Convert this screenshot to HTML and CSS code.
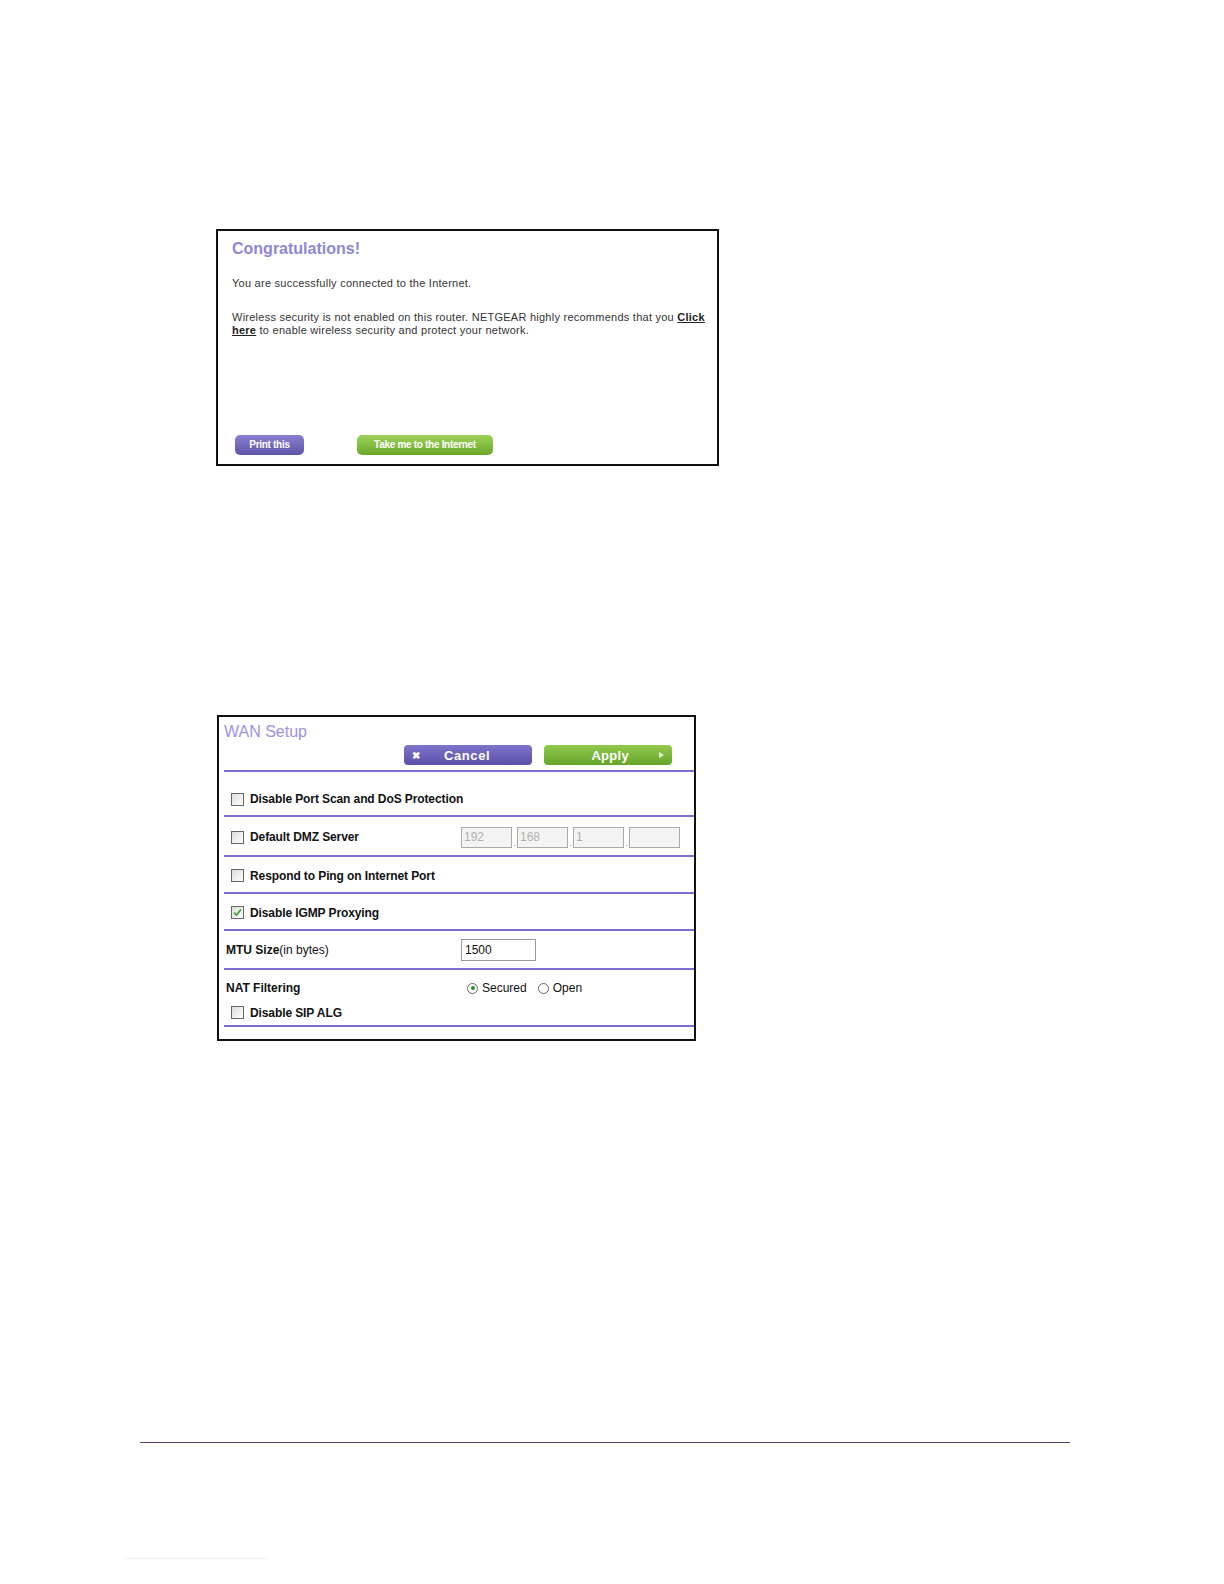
FILE: index.html
```html
<!DOCTYPE html>
<html>
<head>
<meta charset="utf-8">
<link rel="stylesheet" href="styles.css">
</head>
<body>
<div class="page">
  <div class="congrats">
    <h1 class="congrats-title">Congratulations!</h1>
    <p class="msg">You are successfully connected to the Internet.</p>
    <p class="msg msg-2">Wireless security is not enabled on this router. NETGEAR highly recommends that you <a class="lnk">Click</a><br><a class="lnk">here</a> to enable wireless security and protect your network.</p>
    <div class="congrats-btns">
      <span class="btn btn-purple btn-print">Print this</span>
      <span class="btn btn-green btn-take">Take me to the Internet</span>
    </div>
  </div>

  <div class="wan">
    <div class="wan-title">WAN Setup</div>
    <div class="wan-btns">
      <span class="wbtn wbtn-cancel"><span class="x">&#x2716;</span><span class="wlabel">Cancel</span></span>
      <span class="wbtn wbtn-apply"><span class="wlabel">Apply</span><span class="tri"></span></span>
    </div>
    <div class="rule"></div>
    <div class="row r1"><span class="cb"></span><span class="lbl">Disable Port Scan and DoS Protection</span></div>
    <div class="rule"></div>
    <div class="row r2"><span class="cb"></span><span class="lbl lbl-fixed">Default DMZ Server</span>
      <span class="ip"><span class="ipbox">192</span><span class="dot">.</span><span class="ipbox">168</span><span class="dot">.</span><span class="ipbox">1</span><span class="dot">.</span><span class="ipbox"></span></span>
    </div>
    <div class="rule"></div>
    <div class="row r3"><span class="cb"></span><span class="lbl">Respond to Ping on Internet Port</span></div>
    <div class="rule"></div>
    <div class="row r4"><span class="cb checked"><svg width="11" height="11" viewBox="0 0 11 11"><path d="M2 5.5 L4.5 8 L9 2.5" fill="none" stroke="#3a9a2a" stroke-width="1.6"/></svg></span><span class="lbl">Disable IGMP Proxying</span></div>
    <div class="rule"></div>
    <div class="row r5"><span class="lbl2 lbl-fixed2"><b>MTU Size</b>(in bytes)</span><span class="mtu">1500</span></div>
    <div class="rule"></div>
    <div class="row r6"><span class="lbl2 lbl-fixed2"><b>NAT Filtering</b></span>
      <span class="radios"><span class="rd on"></span><span class="rlbl">Secured</span><span class="rd"></span><span class="rlbl">Open</span></span>
    </div>
    <div class="row r7"><span class="cb"></span><span class="lbl">Disable SIP ALG</span></div>
    <div class="rule"></div>
  </div>

  <div class="footer-rule"></div>
  <div class="footer-short"></div>
</div>
</body>
</html>
```

FILE: styles.css
```css
html, body {
  margin: 0;
  padding: 0;
  background: #ffffff;
}
.page {
  width: 1224px;
  height: 1584px;
  display: flow-root;
  overflow: hidden;
  font-family: "Liberation Sans", Arial, sans-serif;
}
.congrats {
  margin: 229px 0 0 216px;
  width: 503px;
  height: 237px;
  box-sizing: border-box;
  border: 2px solid #111;
  padding: 8px 14px 0 14px;
}
.congrats-title {
  margin: 0;
  font-size: 16px;
  font-weight: bold;
  color: #8e87d9;
  line-height: 20px;
}
.msg {
  margin: 18px 0 0 0;
  font-size: 11px;
  color: #333;
  line-height: 13.5px;
  letter-spacing: 0.25px;
}
.msg-2 {
  margin-top: 20px;
  width: 476px;
}
.lnk {
  font-weight: bold;
  text-decoration: underline;
  color: #222;
}
.congrats-btns {
  display: flex;
  margin-top: 97px;
  margin-left: 3px;
}
.btn {
  display: flex;
  align-items: center;
  justify-content: center;
  height: 20px;
  border-radius: 5px;
  color: #fff;
  font-size: 10px;
  font-weight: bold;
  letter-spacing: -0.3px;
}
.btn-purple {
  background: linear-gradient(#8a80d0, #5e54a8);
}
.btn-green {
  background: linear-gradient(#9ed25a, #6aa82a);
}
.btn-print { width: 69px; }
.btn-take { width: 136px; margin-left: 53px; }

.wan {
  margin: 249px 0 0 217px;
  width: 479px;
  height: 326px;
  box-sizing: border-box;
  border: 2px solid #111;
  padding: 5px 0 0 4px;
}
.wan-title {
  font-size: 16px;
  color: #9c92e0;
  line-height: 19px;
  margin-left: 1px;
}
.wan-btns {
  display: flex;
  margin-left: 181px;
  margin-top: 4px;
  height: 20px;
}
.wbtn {
  display: flex;
  align-items: center;
  height: 20px;
  width: 128px;
  border-radius: 4px;
  color: #fff;
  font-size: 13px;
  font-weight: bold;
  box-sizing: border-box;
}
.wbtn-cancel {
  background: linear-gradient(#7e74cc, #5a50a8);
  padding-left: 8px;
}
.wbtn-cancel .x { font-size: 10px; width: 32px; }
.wbtn-cancel .wlabel { letter-spacing: 0.6px; }
.wbtn-apply {
  background: linear-gradient(#92c94e, #65a52a);
  margin-left: 12px;
  justify-content: flex-end;
  padding-right: 8px;
}
.wbtn-apply .wlabel { margin-right: 30px; letter-spacing: 0.3px; }
.tri {
  width: 0; height: 0;
  border-left: 5px solid #e8f3dc;
  border-top: 3.5px solid transparent;
  border-bottom: 3.5px solid transparent;
}
.rule {
  height: 2px;
  background: #7a6fd0;
  margin-left: 1px;
}
.wan-btns + .rule { margin-top: 5px; }
.row {
  display: flex;
  align-items: center;
  font-size: 12px;
  color: #111;
  box-sizing: border-box;
}
.r1 { height: 43px; padding-top: 11px; }
.r2 { height: 38px; padding-top: 2px; }
.r3 { height: 35px; padding-top: 2px; }
.r4 { height: 35px; padding-top: 2px; }
.r5 { height: 37px; }
.r6 { height: 30px; padding-top: 6px; }
.r7 { height: 25px; }
.cb {
  width: 11px;
  height: 11px;
  border: 1px solid #666;
  background: linear-gradient(135deg, #ddd, #fff);
  margin-left: 8px;
  margin-right: 6px;
  display: flex;
  align-items: center;
  justify-content: center;
}
.cb svg { display: block; }
.lbl {
  font-weight: bold;
  letter-spacing: -0.1px;
}
.lbl-fixed { width: 211px; }
.lbl2 { margin-left: 3px; }
.lbl-fixed2 { width: 235px; }
.ip { display: flex; align-items: flex-end; }
.ipbox {
  width: 51px;
  height: 21px;
  box-sizing: border-box;
  border: 1px solid #aaa;
  background: #f4f4f4;
  color: #b0b0b0;
  font-size: 12px;
  padding-left: 2px;
  line-height: 19px;
}
.dot { width: 5px; color: #999; font-size: 11px; line-height: 12px; text-align: center; }
.mtu {
  width: 75px;
  height: 22px;
  box-sizing: border-box;
  border: 1px solid #999;
  font-size: 12px;
  padding-left: 3px;
  line-height: 20px;
  color: #111;
}
.radios { display: flex; align-items: center; margin-left: 6px; }
.rd {
  width: 11px;
  height: 11px;
  box-sizing: border-box;
  border: 1px solid #666;
  border-radius: 50%;
  background: #fff;
  margin-right: 4px;
  position: relative;
}
.rd.on::after {
  content: "";
  position: absolute;
  left: 2.5px;
  top: 2.5px;
  width: 4px;
  height: 4px;
  border-radius: 50%;
  background: #2e8a2e;
}
.rlbl { font-size: 12px; margin-right: 11px; }

.footer-rule {
  margin: 401px 0 0 140px;
  width: 930px;
  height: 1px;
  background: #5a3e6e;
}
.footer-short {
  margin: 115px 0 0 126px;
  width: 140px;
  height: 1px;
  background: #eef1f8;
}
```
